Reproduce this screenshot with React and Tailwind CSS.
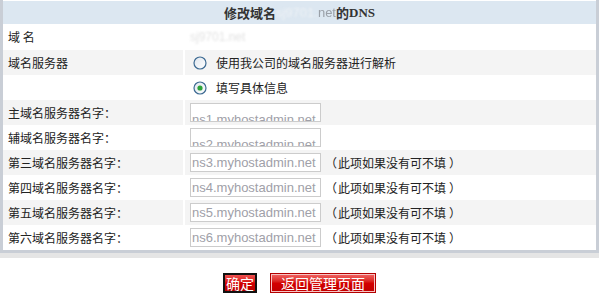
import React from "react";

const CJK = { fontFamily: '"Noto Sans CJK SC", "Liberation Sans", sans-serif' };

function Radio({ checked }) {
  return (
    <svg width="14" height="14" viewBox="0 0 14 14" className="shrink-0">
      <defs>
        <linearGradient id={checked ? "rg1" : "rg0"} x1="0" y1="0" x2="1" y2="1">
          <stop offset="0" stopColor="#dfe6ee" />
          <stop offset="1" stopColor="#ffffff" />
        </linearGradient>
      </defs>
      <circle cx="7" cy="7" r="6" fill={`url(#${checked ? "rg1" : "rg0"})`} stroke="#3d6a92" strokeWidth="1.2" />
      {checked && <circle cx="7" cy="7" r="2.6" fill="#2ea43a" />}
    </svg>
  );
}

function NsBox({ value, low }) {
  return (
    <div className="w-[131px] h-[19px] border border-[#cccccc] bg-white overflow-hidden shrink-0">
      <div
        className={`px-[1px] text-[13px] leading-[17px] text-[#a0a0a8] whitespace-nowrap ${low ? "pt-[7px]" : ""}`}
        style={{ fontFamily: '"Liberation Sans", Arial, sans-serif' }}
      >
        {value}
      </div>
    </div>
  );
}

function Row({ label, gray, h = "h-[25px]", children }) {
  const bg = gray ? "bg-[#f4f4f4]" : "bg-white";
  return (
    <div className={`grid grid-cols-[180px_1fr] gap-x-[2px] ${h}`}>
      <div className={`${bg} flex items-center pl-[5px] text-[12px] text-[#222] whitespace-nowrap`}>{label}</div>
      <div className={`${bg} flex items-center pl-[5px] text-[12px] text-[#222]`}>{children}</div>
    </div>
  );
}

const note = (
  <span className="ml-[4px] text-[12px] text-[#222] whitespace-nowrap flex items-center">
    <span>（</span>
    <span className="ml-[1px]">此项如果没有可不填</span>
    <span className="ml-[3px]">）</span>
  </span>
);

export default function App() {
  const servers = [
    ["主域名服务器名字：", "ns1.myhostadmin.net", true, false],
    ["辅域名服务器名字：", "ns2.myhostadmin.net", false, false],
    ["第三域名服务器名字：", "ns3.myhostadmin.net", true, true],
    ["第四域名服务器名字：", "ns4.myhostadmin.net", false, true],
    ["第五域名服务器名字：", "ns5.myhostadmin.net", true, true],
    ["第六域名服务器名字：", "ns6.myhostadmin.net", false, true],
  ];
  return (
    <div className="w-[599px] h-[295px] bg-white" style={CJK}>
      <div className="border-x-[3px] border-b-[3px] border-[#c9ced6] pt-[1px] bg-white">
        <div className="h-[23px] bg-[#dce7f1] flex items-center justify-center text-[13px] font-bold text-[#333]">
          <span>修改域名</span>
          <span className="text-[#eef2f6] font-normal blur-[1.2px]" style={{ fontFamily: '"Liberation Sans", sans-serif' }}>sj9701.</span>
          <span className="text-[#9aa0a8] font-normal blur-[0.4px]" style={{ fontFamily: '"Liberation Sans", sans-serif' }}>net</span>
          <span>的</span>
          <span className="text-[13px]" style={{ fontFamily: '"Liberation Serif", serif' }}>DNS</span>
        </div>
        <Row label="域 名" h="h-[26px]">
          <span className="text-[#e2e2e2] text-[12px] blur-[1px]" style={{ fontFamily: '"Liberation Sans", sans-serif' }}>sj9701.net</span>
        </Row>
        <Row label="域名服务器" gray>
          <div className="flex items-center gap-[9px] pl-[3px]">
            <Radio />
            <span>使用我公司的域名服务器进行解析</span>
          </div>
        </Row>
        <Row label="">
          <div className="flex items-center gap-[9px] pl-[3px]">
            <Radio checked />
            <span>填写具体信息</span>
          </div>
        </Row>
        {servers.map(([label, v, gray, withNote], i) => (
          <Row key={i} label={label} gray={gray}>
            <NsBox value={v} low={!withNote} />
            {withNote && note}
          </Row>
        ))}
      </div>
      <div className="h-[5px] bg-[#e5e5e5]" />
      <div className="flex justify-center gap-[13px] mt-[15px]">
        <button
          className="w-[34px] h-[20px] border-2 border-[#111] bg-gradient-to-b from-[#f05050] via-[#d40000] to-[#b80000] text-white text-[14px] leading-[16px] flex items-center justify-center"
          style={CJK}
        >
          确定
        </button>
        <button
          className="w-[106px] h-[20px] border border-[#b30000] bg-gradient-to-b from-[#f36363] via-[#d40000] to-[#c00000] text-white text-[14px] leading-[16px] flex items-center justify-center shadow-[inset_0_0_0_1px_#f7c4c4]"
          style={CJK}
        >
          返回管理页面
        </button>
      </div>
    </div>
  );
}
